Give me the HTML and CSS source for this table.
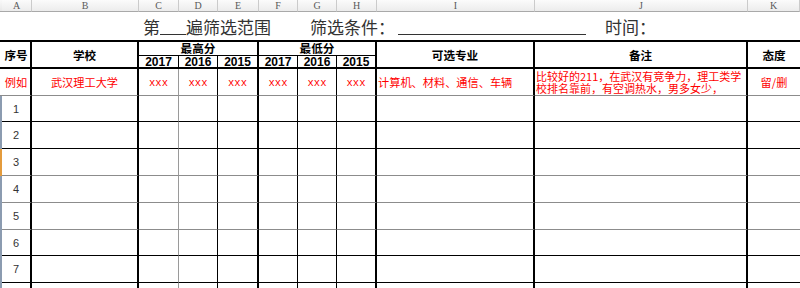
FILE: index.html
```html
<!DOCTYPE html>
<html lang="zh-CN">
<head>
<meta charset="utf-8">
<title>筛选范围</title>
<link rel="stylesheet" href="styles.css">
</head>
<body>
<div class="sheet">
  <!-- column letters -->
  <div class="corner"></div>
  <div class="col-letter">A</div>
  <div class="col-letter">B</div>
  <div class="col-letter">C</div>
  <div class="col-letter">D</div>
  <div class="col-letter">E</div>
  <div class="col-letter">F</div>
  <div class="col-letter">G</div>
  <div class="col-letter">H</div>
  <div class="col-letter">I</div>
  <div class="col-letter">J</div>
  <div class="col-letter">K</div>

  <!-- merged title line -->
  <div class="edge edge-thick"></div>
  <div class="title">
    <span class="tx">第</span><span class="blank blank-short"></span><span class="tx">遍筛选范围</span>
    <span class="tx gap-l">筛选条件：</span><span class="blank blank-long"></span>
    <span class="tx gap-s">时间：</span>
  </div>

  <!-- two-line header -->
  <div class="edge edge-thick span2"></div>
  <div class="hd span2 thick">序号</div>
  <div class="hd span2 thick">学校</div>
  <div class="hd group thick">最高分</div>
  <div class="hd group thick">最低分</div>
  <div class="hd span2 thick">可选专业</div>
  <div class="hd span2 thick">备注</div>
  <div class="hd span2">态度</div>
  <div class="yr thin">2017</div>
  <div class="yr thin">2016</div>
  <div class="yr thick">2015</div>
  <div class="yr thin">2017</div>
  <div class="yr thin">2016</div>
  <div class="yr thick">2015</div>

  <!-- sample entry -->
  <div class="row soft example">
    <div class="edge"></div>
    <div>例如</div>
    <div>武汉理工大学</div>
    <div class="xxx">xxx</div>
    <div class="xxx">xxx</div>
    <div class="xxx">xxx</div>
    <div class="xxx">xxx</div>
    <div class="xxx">xxx</div>
    <div class="xxx">xxx</div>
    <div class="left">计算机、材料、通信、车辆</div>
    <div class="left note"><span>比较好的211，在武汉有竞争力，理工类学</span><span>校排名靠前，有空调热水，男多女少，</span></div>
    <div>留/删</div>
  </div>

  <div class="row">
    <div class="rowhead"></div><div class="num">1</div><div></div><div></div><div></div><div></div><div></div><div></div><div></div><div></div><div></div><div></div>
  </div>
  <div class="row">
    <div class="rowhead"></div><div class="num">2</div><div></div><div></div><div></div><div></div><div></div><div></div><div></div><div></div><div></div><div></div>
  </div>
  <div class="row soft">
    <div class="rowhead active"></div><div class="num">3</div><div></div><div></div><div></div><div></div><div></div><div></div><div></div><div></div><div></div><div></div>
  </div>
  <div class="row soft">
    <div class="rowhead"></div><div class="num">4</div><div></div><div></div><div></div><div></div><div></div><div></div><div></div><div></div><div></div><div></div>
  </div>
  <div class="row soft">
    <div class="rowhead"></div><div class="num">5</div><div></div><div></div><div></div><div></div><div></div><div></div><div></div><div></div><div></div><div></div>
  </div>
  <div class="row">
    <div class="rowhead"></div><div class="num">6</div><div></div><div></div><div></div><div></div><div></div><div></div><div></div><div></div><div></div><div></div>
  </div>
  <div class="row">
    <div class="rowhead"></div><div class="num">7</div><div></div><div></div><div></div><div></div><div></div><div></div><div></div><div></div><div></div><div></div>
  </div>
  <div class="row">
    <div class="rowhead"></div><div class="num"></div><div></div><div></div><div></div><div></div><div></div><div></div><div></div><div></div><div></div><div></div>
  </div>
</div>
</body>
</html>
```

FILE: styles.css
```css
html, body {
  margin: 0;
  padding: 0;
  background: #fff;
}

body {
  width: 800px;
  height: 288px;
  overflow: hidden;
  font-family: "Liberation Sans", "Noto Sans CJK SC", sans-serif;
  color: #000;
}

/* spreadsheet grid: row-header strip + columns A..K */
.sheet {
  display: grid;
  grid-template-columns: 2px 30px 107px 40px 39px 41px 39px 39px 40px 158px 213px 52px;
  grid-template-rows: 12px 30px 14px 13px 27px 26px 27px 27px 27px 27px 26px 27px 27px;
}

.sheet div {
  box-sizing: border-box;
  min-width: 0;
}

/* column letters */
.corner {
  background: linear-gradient(#f9f9f9, #e8e8e8);
  border-bottom: 1px solid #a9a9a9;
}

.col-letter {
  display: flex;
  align-items: center;
  justify-content: center;
  background: linear-gradient(#fbfbfb, #ececec);
  border-right: 1px solid #cbcbcb;
  border-bottom: 1px solid #a9a9a9;
  font-family: "Liberation Serif", serif;
  font-size: 10px;
  color: #5a5a5a;
  line-height: 1;
}

/* left edge beside the merged top rows */
.edge-thick {
  border-bottom: 2px solid #000;
}

/* row-header strip on the left */
.rowhead {
  background: #8b9bb0;
}

.rowhead.active {
  background: #e49b3c;
}

.span2 {
  grid-row: span 2;
}

/* merged title line */
.title {
  grid-column: 2 / -1;
  display: flex;
  align-items: center;
  padding-left: 141px;
  border-bottom: 2px solid #000;
  font-family: "Noto Sans CJK SC", sans-serif;
  font-size: 17px;
  color: #333;
  white-space: nowrap;
}

.title .tx {
  line-height: 17px;
}

.blank {
  display: inline-block;
  height: 17px;
  border-bottom: 1px solid #333;
}

.blank-short {
  width: 26px;
}

.blank-long {
  width: 188px;
  margin-left: 3px;
}

.gap-l {
  margin-left: 39px;
}

.gap-s {
  margin-left: 19px;
}

/* two-line header */
.hd,
.yr {
  display: flex;
  align-items: center;
  justify-content: center;
  font-weight: bold;
  white-space: nowrap;
}

.hd {
  font-family: "Noto Sans CJK SC", sans-serif;
  font-size: 11.6px;
  line-height: 12px;
  border-bottom: 2px solid #000;
}

.hd.group {
  grid-column: span 3;
  border-bottom: 1px solid #000;
  padding-bottom: 1px;
}

.yr {
  font-family: "Liberation Sans", sans-serif;
  font-size: 12px;
  line-height: 12px;
  border-bottom: 2px solid #000;
  padding-top: 1px;
}

.thick {
  border-right: 2px solid #000;
}

.thin {
  border-right: 1px solid #000;
}

/* body rows */
.row {
  display: contents;
  --line: #000;
}

.row.soft {
  --line: #8c8c8c;
}

.row > div {
  display: flex;
  align-items: center;
  justify-content: center;
  border-bottom: 1px solid var(--line);
  white-space: nowrap;
}

.row > .rowhead {
  border-bottom: none;
}

.row > :nth-child(2),
.row > :nth-child(3),
.row > :nth-child(6),
.row > :nth-child(9),
.row > :nth-child(10),
.row > :nth-child(11) {
  border-right: 2px solid #000;
}

.row > :nth-child(4) {
  border-right: 1px solid #9a9a9a;
}

.row > :nth-child(5),
.row > :nth-child(7),
.row > :nth-child(8) {
  border-right: 1px solid #000;
}

.num {
  font-family: "Liberation Sans", sans-serif;
  font-size: 11px;
  color: #333;
}

/* sample entry in red */
.example > div {
  color: #ff0000;
  font-family: "Noto Sans CJK SC", sans-serif;
  font-size: 11.2px;
  line-height: 12px;
}

.example > .xxx {
  font-family: "Liberation Mono", monospace;
  font-size: 10.5px;
  padding-top: 1px;
}

.example > .left {
  justify-content: flex-start;
  padding-left: 1px;
}

.example > .note {
  flex-direction: column;
  justify-content: center;
  align-items: flex-start;
  font-size: 11px;
  line-height: 12.5px;
}
```
